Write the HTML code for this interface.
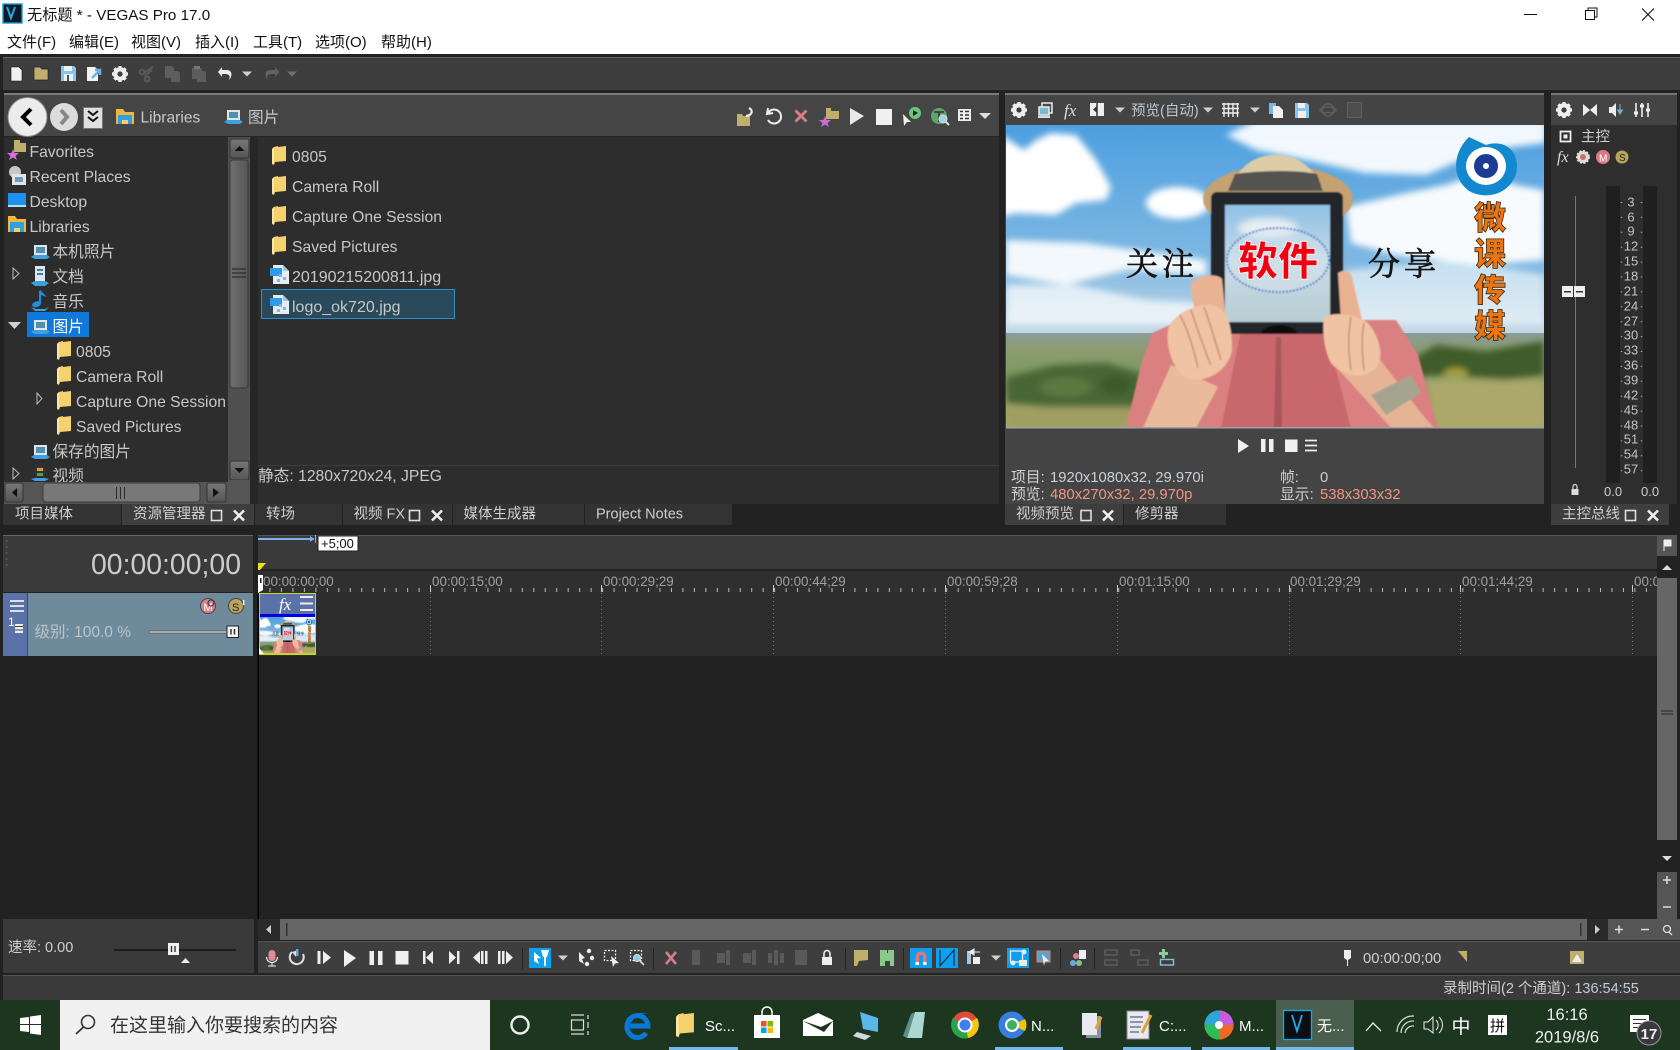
<!DOCTYPE html>
<html lang="zh"><head><meta charset="utf-8"><title>VEGAS Pro 17.0</title>
<style>
html,body{margin:0;padding:0;background:#222;width:1680px;height:1050px;overflow:hidden}
svg{display:block}
text{font-family:"Liberation Sans","Noto Sans CJK SC",sans-serif;font-size:15.7px;fill:#c8c8c8;white-space:pre}
.b{fill:#111;font-size:15px}
.l{fill:#c9c9c9;font-size:15.6px}
.t{fill:#cfcfcf;font-size:14.5px}
.r{fill:#a0a0a0;font-size:13.4px}
.m{fill:#c4c4c4;font-size:13px;text-anchor:middle}
.i{font-size:14.8px;fill:#c8d0d8}
.s{font-size:14.8px;fill:#f09585}
.w{fill:#fff;font-size:15px}
.o{font-family:"Noto Sans CJK SC",sans-serif;font-weight:900;font-size:32px;fill:#ee7410;stroke:#3a2a10;stroke-width:.8px;text-anchor:middle}
.k{font-family:"Noto Serif CJK SC",serif;font-size:32px;fill:#141414;stroke:#141414;stroke-width:.7px;letter-spacing:4px}
</style></head><body>
<svg xmlns="http://www.w3.org/2000/svg" width="1680" height="1050" viewBox="0 0 1680 1050">
<defs>
<linearGradient id="sky" x1="0" y1="0" x2="0" y2="1"><stop offset="0" stop-color="#4d9fe0"/><stop offset=".45" stop-color="#7fb8e2"/><stop offset=".7" stop-color="#c7dae6"/><stop offset="1" stop-color="#d5e0e6"/></linearGradient>
<linearGradient id="scr" x1="0" y1="0" x2="0" y2="1"><stop offset="0" stop-color="#8fc0e6"/><stop offset=".5" stop-color="#c8dbe6"/><stop offset="1" stop-color="#b8ccd4"/></linearGradient>
<linearGradient id="grd" x1="0" y1="0" x2="0" y2="1"><stop offset="0" stop-color="#8a9c98"/><stop offset=".18" stop-color="#8c9c72"/><stop offset=".4" stop-color="#7f9a62"/><stop offset="1" stop-color="#a8a868"/></linearGradient>
<linearGradient id="sb" x1="0" y1="0" x2="1" y2="0"><stop offset="0" stop-color="#6f6f6f"/><stop offset="1" stop-color="#565656"/></linearGradient>
<linearGradient id="sh" x1="0" y1="0" x2="0" y2="1"><stop offset="0" stop-color="#777"/><stop offset="1" stop-color="#555"/></linearGradient>
<filter id="bl" x="-20%" y="-20%" width="140%" height="140%"><feGaussianBlur stdDeviation="3.5"/></filter>
<filter id="bl2" x="-5%" y="-5%" width="110%" height="110%"><feGaussianBlur stdDeviation=".9"/></filter>
<clipPath id="pc"><rect width="538" height="303"/></clipPath>

<g id="fd"><path d="M0 3 2 1 6 0 V1 L14 0 V15 L3 16 2 19 0 18Z" fill="#f6d26f"/><path d="M0 3 2 1V17L0 18Z" fill="#fbe7a6"/></g>
<g id="pc2"><path d="M3 1H16V11H3Z" fill="#dfe6ea"/><path d="M5 3H14V9H5Z" fill="#4f8fb0"/><path d="M0 13 3 11H16L19 13 16 15H4Z" fill="#3f9fe0"/></g>
<g id="jpg"><path d="M3 0H13L19 6V19H3Z" fill="#e6eef4"/><path d="M13 0 19 6H13Z" fill="#9fc8e8"/><path d="M0 3H12V11H0Z" fill="#2e9be8"/><rect x="9" y="9" width="3" height="3" fill="#7fb8df"/><rect x="13" y="12" width="3" height="3" fill="#7fb8df"/><rect x="7" y="14" width="3" height="3" fill="#7fb8df"/></g>
<g id="gear"><circle r="5.2" fill="none" stroke="#eee" stroke-width="3.4"/><path d="M-1.6-8H1.6V8H-1.6ZM-8-1.6H8V1.6H-8Z" fill="#eee"/><path d="M-1.6-8H1.6V8H-1.6ZM-8-1.6H8V1.6H-8Z" fill="#eee" transform="rotate(45)"/><circle r="2.6" fill="#3d3d3d"/></g>
<path id="xx" d="M-5-5 5 5M5-5-5 5" stroke="#eee" stroke-width="2.6" fill="none"/>
<rect id="sq" width="10" height="10" fill="none" stroke="#ddd" stroke-width="1.6"/>
<path id="da" d="M-5-2.5H5L0 2.5Z" fill="#cfcfcf"/>

<g id="pic" clip-path="url(#pc)">
<rect width="538" height="303" fill="url(#sky)"/>
<g fill="#fff" filter="url(#bl)">
<path d="M-5 10 18 25 30 15 45 8 70 10 90 35 105 62 100 75 70 78 50 90 10 88-5 92Z"/>
<ellipse cx="172" cy="78" rx="32" ry="16"/>
<path d="M220 10 250-5H540V18L480 25 420 50 360 48 300 35 250 25Z" fill-opacity=".92"/>
<path d="M340 82 400 68 440 60 475 48 510 60 538 65V135L470 140 390 130 345 118Z" fill-opacity=".95"/>
<path d="M0 115 80 118 130 125 200 135V150L120 145 60 160 0 150Z" fill-opacity=".9"/>
<path d="M0 160 70 160 140 175 200 178V200H0Z" fill-opacity=".7"/>
<path d="M340 145 450 135 538 150V200H340Z" fill-opacity=".55"/>
</g>
<rect y="208" width="538" height="95" fill="url(#grd)"/>
<g filter="url(#bl)">
<path d="M0 252 50 240 100 238 135 248 140 282 60 284 0 278Z" fill="#4a6635"/>
<ellipse cx="60" cy="262" rx="26" ry="10" fill="#5a7a42"/>
<ellipse cx="110" cy="260" rx="16" ry="10" fill="#3e5a2c"/>
<path d="M405 235 430 220 480 226 538 216V250L500 255 440 250 410 252Z" fill="#3f5c2c"/>
<ellipse cx="450" cy="248" rx="12" ry="5" fill="#a8a040"/>
<path d="M0 282H130L120 303H0Z" fill="#a09e60"/>
<path d="M420 255H538V303H430Z" fill="#aca86a"/>
</g>
<g filter="url(#bl2)">
<path d="M120 303 135 240 146 208 175 195 390 195 412 230 432 303Z" fill="#db8080"/>
<path d="M215 303 235 205 320 205 345 303Z" fill="#c9686c"/>
<path d="M270 212 268 303H276L275 212Z" fill="#a9565a"/>
<path d="M137 303 165 240 212 262 190 303Z" fill="#e9bb9c"/>
<path d="M328 240 372 232 415 288 428 303H385L345 258Z" fill="#e6b395"/>
<path d="M365 270 405 250 415 268 380 290Z" fill="#a5a58f"/>
<ellipse cx="272" cy="74" rx="75" ry="34" fill="#c4a272"/>
<path d="M226 64C232 40 250 30 270 30 295 30 308 45 317 64Z" fill="#dccda8"/>
<path d="M229 49C260 45 290 45 311 49L317 66H222Z" fill="#55534f"/>
<rect x="205" y="67" width="132" height="142" rx="6" fill="#232629"/>
<rect x="219" y="80" width="105" height="117" fill="url(#scr)"/>
<ellipse cx="262" cy="103" rx="30" ry="10" fill="#e8eef2" filter="url(#bl)"/>
<ellipse cx="272" cy="135" rx="51" ry="32" fill="#d8e4ea" fill-opacity=".45" stroke="#3a7fd0" stroke-width="2" stroke-dasharray="2 1.5"/>
<path d="M255 209a18 9 0 0 1 36 0Z" fill="#111"/>
<path d="M185 158C192 150 212 148 216 154L220 195H192C188 180 184 170 185 158Z" fill="#e9b393"/>
<path d="M332 148C338 144 344 146 346 152L356 195H335Z" fill="#e9b393"/>
<path d="M162 205C165 190 190 178 205 180 222 183 226 200 226 225 222 250 190 262 176 250 166 240 160 222 162 205Z" fill="#f0c3a4"/>
<path d="M185 185C192 205 198 225 205 240M198 182C205 200 210 220 215 235M174 190C182 205 188 225 192 243" stroke="#c48a70" stroke-width="1.400" fill="none"/>
<path d="M318 192C330 186 352 190 362 198 372 210 378 228 372 240 360 258 335 250 325 238 318 225 316 205 318 192Z" fill="#f0c3a4"/>
<path d="M345 192C342 210 342 225 345 245M358 198C355 212 356 228 358 245" stroke="#c48a70" stroke-width="1.400" fill="none"/>
</g>
<text x="272" y="150" text-anchor="middle" style="font-family:'Noto Sans CJK SC',sans-serif;font-weight:900;font-size:40px;fill:#f00010;stroke:#fff;stroke-width:.8px">软件</text>
<text x="120" y="150" class="k">关注</text>
<text x="362" y="150" class="k">分享</text>
<path d="M463 12C446 28 445 55 465 67 490 78 512 60 511 40 510 22 495 15 480 20Z" fill="#1488cf"/>
<ellipse cx="480" cy="41" rx="20" ry="19" fill="#fff"/>
<circle cx="480" cy="41" r="12" fill="#1c3c94"/><circle cx="480" cy="41" r="3" fill="#fff"/>
<text x="484" y="104" class="o">微</text><text x="484" y="140" class="o">课</text><text x="484" y="176" class="o">传</text><text x="484" y="212" class="o">媒</text>
</g>
</defs>

<rect width="1680" height="1050" fill="#222"/>
<!-- Title -->
<rect width="1680" height="54" fill="#fff"/>
<rect x="3" y="4" width="19" height="19" fill="#0b1a26" stroke="#1a9ad6" stroke-width="1.4"/>
<path d="M7 7 11 18 15 7" fill="none" stroke="#25a9e8" stroke-width="2"/>
<text x="27" y="20" class="b" style="font-size:15.2px">无标题 * - VEGAS Pro 17.0</text>
<text x="7" y="47" class="b">文件(F)</text><text x="69" y="47" class="b">编辑(E)</text><text x="131" y="47" class="b">视图(V)</text><text x="195" y="47" class="b">插入(I)</text><text x="253" y="47" class="b">工具(T)</text><text x="315" y="47" class="b">选项(O)</text><text x="381" y="47" class="b">帮助(H)</text>
<path d="M1524 14.5H1537" stroke="#111" stroke-width="1"/>
<path d="M1585.5 10.5H1594.5V19.5H1585.5ZM1588 10.5V8H1597V17H1594.5" fill="none" stroke="#111"/>
<path d="M1642 8.500 1654 20.500M1654 8.500 1642 20.500" stroke="#111" stroke-width="1.1"/>

<!-- top toolbar -->
<rect x="3" y="57" width="1677" height="33" fill="#3e3e3e"/>
<rect x="3" y="57" width="1677" height="1" fill="#666"/>
<g transform="translate(11,66)"><path d="M0 1H8L11 4V15H0Z" fill="#f2f2f2" stroke="#111" stroke-width=".6"/></g>
<g transform="translate(34,67)"><path d="M0 0H6L8 2H14V13H0Z" fill="#bfae6c" stroke="#222" stroke-width=".7"/></g>
<g transform="translate(61,66)"><path d="M0 0H13L15 2V15H0Z" fill="#86c6e8"/><rect x="3" y="0" width="8" height="5" fill="#f0f0f0"/><rect x="3" y="8" width="9" height="7" fill="#f0f0f0"/><rect x="6" y="9" width="2" height="6" fill="#2a5a75"/></g>
<g transform="translate(87,66)"><path d="M0 1H8L11 4V15H0Z" fill="#f2f2f2"/><path d="M5 12 12 5M8 4H13V9" stroke="#6ab4dc" stroke-width="2.4" fill="none"/></g>
<use href="#gear" x="120" y="74"/>
<g transform="translate(139,66)" fill="none" stroke="#5d5d5d" stroke-width="1.8"><circle cx="3" cy="6" r="2.4"/><circle cx="8" cy="13" r="2.4"/><path d="M5 7 14 1M6 10 13 4"/></g>
<g transform="translate(165,66)" fill="#5d5d5d"><path d="M0 0H7L9 2V5H13L15 7V16H6V12H0Z"/></g>
<g transform="translate(191,66)" fill="#5d5d5d"><path d="M1 2H11V5H14L15 7V16H6V13H1Z"/><rect x="3" y="0" width="6" height="3" fill="#777"/></g>
<path d="M218 72 222 67V70H227C232 70 233 76 229 80 231 74 228 74 222 74V77Z" fill="#eee"/>
<use href="#da" x="247" y="74"/>
<path d="M279 72 275 67V70H270C265 70 264 76 268 80 266 74 269 74 275 74V77Z" fill="#626262"/>
<use href="#da" x="292" y="74" style="opacity:.35"/>

<!-- explorer -->
<rect x="4" y="93" width="995" height="411" fill="#2d2d2d"/>
<rect x="4" y="93" width="995" height="44" fill="#454545"/>
<rect x="4" y="93" width="995" height="2" fill="#7a7a7a"/>
<rect x="4" y="136" width="995" height="1" fill="#262626"/>
<circle cx="27.500" cy="117" r="19.500" fill="#ececec" stroke="#888"/>
<path d="M31 109 23 117 31 125" fill="none" stroke="#000" stroke-width="4"/>
<circle cx="64" cy="117" r="14" fill="#dcdcdc"/>
<path d="M61 110 67 117 61 124" fill="none" stroke="#888" stroke-width="4"/>
<rect x="83.500" y="107.500" width="19" height="21" fill="#dfdfdf" stroke="#777"/>
<path d="M88 111 93 115 98 111M88 117 93 121 98 117" fill="none" stroke="#111" stroke-width="2"/>
<path d="M116 109H123L125 112H134V124H116Z" fill="#f2b63c"/><path d="M118 115H132V124H128V120H122V124H118Z" fill="#2f9fe6"/><rect x="122" y="120" width="6" height="4" fill="#f5d060"/>
<text x="140.500" y="122.500" class="l">Libraries</text>
<use href="#pc2" x="224" y="109"/>
<text x="248" y="122.500" class="l">图片</text>
<!-- explorer right icons -->
<g transform="translate(737,110)"><path d="M0 4H5L6 6H13V16H0Z" fill="#bfae6c"/><path d="M9 6C16 5 16 0 12-2" fill="none" stroke="#eee" stroke-width="2.200"/></g>
<path d="M768 108 767 114 773 113M768 113A7 7 0 1 1 768 120" fill="none" stroke="#eee" stroke-width="2"/>
<path d="M795.500 110.500 806.500 121.500M806.500 110.500 795.500 121.500" stroke="#d47f88" stroke-width="3"/>
<g transform="translate(820,108)"><path d="M6 0H11V3H19V11H6Z" fill="#bfae6c"/><path d="M5 8 6.500 12 11 12 7.500 15 9 19 5 16.500 1 19 2.500 15-1 12 3.500 12Z" fill="#c76fd8"/></g>
<path d="M850 108 864 116 850 125Z" fill="#e8e8e8"/>
<rect x="876" y="109" width="16" height="16" fill="#f0f0f0"/>
<g transform="translate(902,108)"><circle cx="13" cy="5" r="6" fill="#6cc57c"/><path d="M11 2 16 5 11 8Z" fill="#222"/><path d="M1 6 9 14H5L2 18Z" fill="#eee"/></g>
<g transform="translate(931,108)"><circle cx="8" cy="8" r="8" fill="#5ba86a"/><path d="M3 4H13M8 4V14" stroke="#333" stroke-width="1.600"/><circle cx="12" cy="11" r="4" fill="#9fd2ec" stroke="#ddd"/><path d="M15 14 18 17" stroke="#ddd" stroke-width="2"/></g>
<g transform="translate(958,109)"><rect width="13" height="12" fill="#eee"/><path d="M2 2.500H5M7 2.500H11M2 6H5M7 6H11M2 9.500H5M7 9.500H11" stroke="#333" stroke-width="1.500"/></g>
<path d="M979 113H991L985 119Z" fill="#ddd"/>

<!-- tree -->
<g transform="translate(8,140)"><path d="M6 0H12V3H18V12H6Z" fill="#bfae6c"/><path d="M5 9 6.500 13 11 13 7.500 16 9 20 5 17.500 1 20 2.500 16-1 13 3.500 13Z" fill="#d76fd8"/></g>
<text x="29.500" y="157">Favorites</text>
<g transform="translate(8,166)"><circle cx="7" cy="6" r="6" fill="#c8c8c8"/><rect x="4" y="8" width="14" height="11" fill="#e4e4e4"/><rect x="7" y="11" width="8" height="5" fill="#6a9cc0"/></g>
<text x="29.500" y="182">Recent Places</text>
<rect x="8" y="193" width="18" height="12" fill="#1e90f0"/><rect x="8" y="205" width="18" height="2" fill="#b8e0f8"/>
<text x="29.500" y="207">Desktop</text>
<path d="M8 216H15L17 219H26V232H8Z" fill="#f2b63c"/><path d="M10 222H24V232H20V228H14V232H10Z" fill="#2f9fe6"/><rect x="14" y="228" width="6" height="4" fill="#f5d060"/>
<text x="29.500" y="232">Libraries</text>
<use href="#pc2" x="31" y="244"/><text x="52.500" y="257">本机照片</text>
<path d="M13 268 19 273.500 13 279Z" fill="none" stroke="#bbb"/>
<g transform="translate(31,266)"><path d="M4 0H14V15H4Z" fill="#dfe6ea"/><rect x="6" y="3" width="6" height="2" fill="#3a7fb0"/><rect x="6" y="7" width="6" height="2" fill="#3a7fb0"/><path d="M0 17 4 15H14L18 17 14 20H4Z" fill="#3f9fe0"/></g>
<text x="52.500" y="282">文档</text>
<g transform="translate(31,290)"><path d="M10 0V13C10 16 6 18 3 17 0 16 1 13 4 12 6 11 8 11 8 12V1Z" fill="#1f8fe0"/><path d="M10 1 16 7 10 5Z" fill="#1f8fe0"/><path d="M0 17 5 19H14L18 17 14 21H4Z" fill="#3f9fe0"/></g>
<text x="52.500" y="307">音乐</text>
<path d="M8 322H21L14.500 329Z" fill="#cfcfcf"/>
<rect x="27" y="312" width="62" height="25" fill="#0f78d8"/>
<use href="#pc2" x="31" y="319"/><text x="52.500" y="332" class="w" style="font-size:15.7px">图片</text>
<use href="#fd" x="57" y="341"/><text x="76" y="357">0805</text>
<use href="#fd" x="57" y="366"/><text x="76" y="382">Camera Roll</text>
<path d="M37 393 42 398.500 37 404Z" fill="none" stroke="#bbb"/>
<use href="#fd" x="57" y="391"/><text x="76" y="407">Capture One Session</text>
<use href="#fd" x="57" y="416"/><text x="76" y="432">Saved Pictures</text>
<use href="#pc2" x="31" y="444"/><text x="52.500" y="457">保存的图片</text>
<path d="M13 468 19 473.500 13 479Z" fill="none" stroke="#bbb"/>
<g transform="translate(31,466)"><rect x="4" width="10" height="13" fill="#333"/><rect x="6" y="2" width="6" height="3" fill="#d8a040"/><rect x="6" y="7" width="6" height="3" fill="#4f9f60"/><path d="M0 13 4 12H14L18 13 14 15H4Z" fill="#3f9fe0"/></g>
<text x="52.500" y="481">视频</text>
<!-- scrollbars -->
<rect x="228" y="137" width="22" height="367" fill="#505050"/>
<rect x="230" y="139" width="19" height="19" rx="2" fill="url(#sh)" stroke="#333"/><path d="M234.500 151H244.500L239.500 146Z" fill="#111"/>
<rect x="230" y="160" width="18" height="228" rx="3" fill="url(#sb)" stroke="#3a3a3a"/>
<path d="M232 269H246M232 273H246M232 277H246" stroke="#2c2c2c" stroke-width="1.300"/>
<rect x="230" y="461" width="19" height="19" rx="2" fill="url(#sh)" stroke="#333"/><path d="M234.500 468H244.500L239.500 473Z" fill="#111"/>
<rect x="4" y="482" width="224" height="22" fill="#555"/>
<rect x="5" y="483" width="18" height="19" rx="2" fill="url(#sh)" stroke="#333"/><path d="M17 488V497L12 492.500Z" fill="#111"/>
<rect x="43" y="483" width="157" height="19" rx="3" fill="#787878" stroke="#3a3a3a"/>
<path d="M116.500 487V499M120.500 487V499M124.500 487V499" stroke="#2c2c2c"/>
<rect x="207" y="483" width="19" height="19" rx="2" fill="url(#sh)" stroke="#333"/><path d="M213 488V497L219 492.500Z" fill="#111"/>
<rect x="250" y="137" width="8" height="367" fill="#262626"/>
<rect x="228" y="480" width="22" height="24" fill="#555"/>
<!-- list -->
<use href="#fd" x="272" y="146"/><text x="292" y="162">0805</text>
<use href="#fd" x="272" y="176"/><text x="292" y="192">Camera Roll</text>
<use href="#fd" x="272" y="206"/><text x="292" y="222">Capture One Session</text>
<use href="#fd" x="272" y="236"/><text x="292" y="252">Saved Pictures</text>
<use href="#jpg" x="270" y="265"/><text x="292" y="282" style="font-size:16px">20190215200811.jpg</text>
<rect x="261.500" y="289.500" width="193" height="29" fill="#2a4a5c" stroke="#2a8fc5"/>
<use href="#jpg" x="270" y="295"/><text x="292" y="312" style="font-size:16px">logo_ok720.jpg</text>
<rect x="258" y="465" width="741" height="1" fill="#3c3c3c"/>
<text x="258" y="481">静态: 1280x720x24, JPEG</text>

<!-- tabs -->
<rect x="0" y="504" width="1005" height="31" fill="#222"/>
<rect x="3" y="504" width="118" height="21" fill="#333"/>
<rect x="122" y="504" width="132" height="21" fill="#3e3e3e"/>
<rect x="255" y="504" width="87" height="21" fill="#333"/>
<rect x="343" y="504" width="109" height="21" fill="#333"/>
<rect x="453" y="504" width="131" height="21" fill="#333"/>
<rect x="585" y="504" width="147" height="21" fill="#333"/>
<text x="15" y="518.500" class="t">项目媒体</text>
<text x="133" y="518.500" class="t">资源管理器</text><use href="#sq" x="211.500" y="510.500"/><use href="#xx" x="239" y="515.500"/>
<text x="266" y="518.500" class="t">转场</text>
<text x="353.500" y="518.500" class="t">视频 FX</text><use href="#sq" x="409.500" y="510.500"/><use href="#xx" x="437" y="515.500"/>
<text x="463.500" y="518.500" class="t">媒体生成器</text>
<text x="596" y="518.500" class="t">Project Notes</text>

<!-- preview -->
<rect x="1005" y="93" width="539" height="411" fill="#444"/>
<rect x="1005" y="93" width="539" height="2" fill="#777"/>
<use href="#gear" x="1019" y="110"/>
<g transform="translate(1038,103)"><rect x="4" y="0" width="10" height="10" fill="#4a4a4a" stroke="#eee" stroke-width="1.500"/><rect x="1" y="4" width="10" height="8" fill="#7ab8d8" stroke="#eee" stroke-width="1.500"/><path d="M0 14H12" stroke="#eee" stroke-width="1.800"/></g>
<text x="1064" y="116" style="font-family:'Liberation Serif',serif;font-style:italic;font-size:17px;fill:#ddd">fx</text>
<g transform="translate(1090,103)"><rect width="14" height="13" fill="#eee"/><path d="M7 0V13" stroke="#333" stroke-width="1.500"/><path d="M7 3 3 6.500 7 10Z" fill="#333"/></g>
<use href="#da" x="1120" y="110"/>
<text x="1131" y="115.500" class="i" style="fill:#bcc8d0;font-size:14.5px">预览(自动)</text>
<use href="#da" x="1208" y="110"/>
<g stroke="#eee" stroke-width="1.400" fill="none"><path d="M1224 103V117M1228.500 103V117M1233 103V117M1237.500 103V117M1222 104H1239M1222 108.500H1239M1222 113H1239"/></g>
<use href="#da" x="1255" y="110"/>
<g transform="translate(1269,103)"><path d="M0 0H7V11H0Z" fill="#78b8e0"/><path d="M4 3H10L14 7V15H4Z" fill="#f0f0f0"/></g>
<g transform="translate(1295,103)"><path d="M0 0H12L14 2V15H0Z" fill="#86c6e8"/><rect x="3" y="0" width="7" height="5" fill="#f0f0f0"/><rect x="3" y="8" width="8" height="7" fill="#f0f0f0"/></g>
<g fill="none" stroke="#5d5d5d" stroke-width="1.500"><circle cx="1328" cy="110" r="6"/><ellipse cx="1328" cy="110" rx="8" ry="3"/></g>
<rect x="1347.500" y="102.500" width="14" height="15" fill="#4d4d4d" stroke="#5f5f5f"/>
<use href="#pic" x="1006" y="125"/>
<rect x="1006" y="427" width="538" height="1.500" fill="#a0a0a0"/>
<path d="M1238 439 1249 446 1238 453Z" fill="#f0f0f0"/>
<rect x="1261" y="439" width="4.500" height="13" fill="#f0f0f0"/><rect x="1269" y="439" width="4.500" height="13" fill="#f0f0f0"/>
<rect x="1285" y="439.500" width="12.500" height="12.500" fill="#f0f0f0"/>
<path d="M1305 440.500H1317M1305 445.500H1317M1305 450.500H1317" stroke="#eee" stroke-width="1.800"/>
<text x="1011" y="482" class="i" style="fill:#d0d0d0">项目: </text><text x="1050" y="482" class="i">1920x1080x32, 29.970i</text>
<text x="1011" y="499" class="i" style="fill:#d0d0d0">预览: </text><text x="1050" y="499" class="s">480x270x32, 29.970p</text>
<text x="1280" y="482" class="i" style="fill:#d0d0d0">帧:</text><text x="1320" y="482" class="i">0</text>
<text x="1280" y="499" class="i" style="fill:#d0d0d0">显示: </text><text x="1320" y="499" class="s">538x303x32</text>
<rect x="1005" y="504" width="118" height="21" fill="#3e3e3e"/>
<rect x="1124" y="504" width="102" height="21" fill="#333"/>
<text x="1016" y="518.500" class="t">视频预览</text><use href="#sq" x="1081" y="510.500"/><use href="#xx" x="1108" y="515.500"/>
<text x="1135" y="518.500" class="t">修剪器</text>

<!-- master -->
<rect x="1551" y="93" width="126" height="411" fill="#2e2e2e"/>
<rect x="1551" y="93" width="126" height="32" fill="#444"/>
<rect x="1551" y="93" width="126" height="2" fill="#777"/>
<use href="#gear" x="1564" y="110"/>
<path d="M1583 104 1590 110 1583 116ZM1597 104 1590 110 1597 116Z" fill="#eee"/>
<path d="M1609 107H1612L1616 103V117L1612 113H1609Z" fill="#eee"/><path d="M1620 104V112M1617.500 110 1620 114 1622.500 110Z" stroke="#6fb0d8" fill="#6fb0d8"/>
<g stroke="#eee" stroke-width="1.600"><path d="M1636 103V117M1642 103V117M1648 103V117"/><path d="M1634 113H1638M1640 106H1644M1646 110H1650" stroke-width="3"/></g>
<rect x="1560.500" y="131.500" width="10" height="10" fill="none" stroke="#eee" stroke-width="1.800"/><rect x="1563.500" y="134.500" width="4" height="4" fill="#eee"/>
<text x="1581" y="141.500" class="t">主控</text>
<text x="1557" y="162" style="font-family:'Liberation Serif',serif;font-style:italic;font-size:16px;fill:#ddd">fx</text>
<circle cx="1583" cy="157" r="6" fill="#ddd" stroke="#ddd" stroke-dasharray="2 1.500" stroke-width="2"/><circle cx="1583" cy="157" r="3" fill="#d06a70"/>
<circle cx="1603" cy="157" r="7" fill="#d87a86"/><text x="1599" y="161.500" style="font-size:10px;fill:#fff">M</text>
<circle cx="1622" cy="157" r="6.500" fill="#b8a45c"/><text x="1619" y="161" style="font-size:10px;fill:#222">S</text>
<rect x="1575" y="196" width="1" height="272" fill="#777"/>
<rect x="1562" y="286" width="11" height="11" fill="#eee"/><rect x="1574" y="286" width="11" height="11" fill="#eee"/>
<rect x="1564" y="291" width="7" height="1.500" fill="#333"/><rect x="1576" y="291" width="7" height="1.500" fill="#333"/>
<rect x="1606" y="186" width="14" height="297" fill="#1f1f1f"/><rect x="1643" y="186" width="14" height="297" fill="#1f1f1f"/>
<g>
<text x="1631" y="206.500" class="m">3</text><text x="1631" y="221.500" class="m">6</text><text x="1631" y="235.500" class="m">9</text><text x="1631" y="250.500" class="m">12</text><text x="1631" y="265.500" class="m">15</text><text x="1631" y="280.500" class="m">18</text><text x="1631" y="295.500" class="m">21</text><text x="1631" y="310.500" class="m">24</text><text x="1631" y="325.500" class="m">27</text><text x="1631" y="339.500" class="m">30</text><text x="1631" y="354.500" class="m">33</text><text x="1631" y="369.500" class="m">36</text><text x="1631" y="384.500" class="m">39</text><text x="1631" y="399.500" class="m">42</text><text x="1631" y="414.500" class="m">45</text><text x="1631" y="429.500" class="m">48</text><text x="1631" y="443.500" class="m">51</text><text x="1631" y="458.500" class="m">54</text><text x="1631" y="473.500" class="m">57</text>
</g>
<path d="M1621.500 202V474" stroke="#aaa" stroke-width="1.500" stroke-dasharray="1 13.900"/>
<path d="M1641.500 202V474" stroke="#aaa" stroke-width="1.500" stroke-dasharray="1 13.900"/>
<rect x="1571.500" y="489" width="7" height="6" fill="#ddd"/><path d="M1573 489V486.500A2 2 0 0 1 1577 486.500V489" fill="none" stroke="#ddd" stroke-width="1.200"/>
<text x="1604" y="496" class="t" style="font-size:13px">0.0</text><text x="1641" y="496" class="t" style="font-size:13px">0.0</text>
<rect x="1551" y="504" width="118" height="21" fill="#3e3e3e"/>
<text x="1562" y="518.500" class="t">主控总线</text><use href="#sq" x="1625.500" y="510.500"/><use href="#xx" x="1653" y="515.500"/>

<!-- timeline -->
<rect x="3" y="535" width="250" height="57" fill="#3a3a3a"/>
<rect x="3" y="535" width="250" height="1" fill="#666"/>
<path d="M6.500 540V568" stroke="#555" stroke-width="2" stroke-dasharray="2 4"/>
<text x="91" y="574" style="font-size:28.400px;fill:#cccccc">00:00:00;00</text>
<rect x="3" y="593" width="24.500" height="63" fill="#5a72a8"/>
<rect x="28" y="593" width="225" height="63" fill="#6f8a9a"/>
<path d="M10 601H24M10 606H24M10 611H24" stroke="#eee" stroke-width="1.800"/>
<text x="8" y="626" style="font-size:12px;fill:#fff">1</text>
<rect x="15" y="624" width="8" height="9" fill="#eee"/><path d="M15 626.500H23M15 630H23" stroke="#444"/>
<text x="34.500" y="637" class="t" style="fill:#b8c6ce;font-size:15.500px">级别: 100.0 %</text>
<rect x="149" y="630.500" width="78" height="3" fill="#aaa" stroke="#4d5a62" stroke-width=".6"/>
<rect x="227" y="626" width="11.500" height="11.500" fill="#f4f4f4" stroke="#222"/><path d="M231 629V634.500M234.500 629V634.500" stroke="#333" stroke-width="1.500"/>
<circle cx="208" cy="606" r="7.500" fill="#d8808a" stroke="#444"/><text x="203.500" y="611" style="font-size:11px;fill:#fff">M</text><circle cx="211" cy="603" r="3" fill="none" stroke="#333"/>
<circle cx="236" cy="606" r="7.500" fill="#b8a45c" stroke="#444"/><text x="232" y="611" style="font-size:11px;fill:#222">S</text><rect x="243" y="600" width="1.500" height="5" fill="#eee"/>

<rect x="258" y="535" width="1399" height="34" fill="#3a3a3a"/>
<rect x="258" y="535" width="1399" height="1" fill="#555"/>
<rect x="258" y="569" width="1399" height="2" fill="#222"/>
<rect x="258" y="571" width="1399" height="22" fill="#2f2f2f"/>
<rect x="258" y="593" width="1399" height="63" fill="#2d2d2d"/>
<path d="M258 539H314" stroke="#7fb0f0" stroke-width="2"/><path d="M310 536 314 539 310 542Z" fill="#7fb0f0"/><path d="M315.500 535V543" stroke="#7fb0f0"/>
<rect x="318" y="536" width="40" height="15" fill="#fff" stroke="#222"/><text x="321" y="548" style="font-size:13px;fill:#111">+5;00</text>
<path d="M258 563H266L260 570H258Z" fill="#e8e020"/>
<path d="M258 590H1657" stroke="#bbb" stroke-width="4" stroke-dasharray="1 10.470"/>
<g stroke="#ccc"><path d="M430.500 585V592M601.500 585V592M773.500 585V592M945.500 585V592M1117.500 585V592M1289.500 585V592M1460.500 585V592M1632.500 585V592"/></g>
<g stroke="#777" stroke-dasharray="1 3"><path d="M430.500 593V656M601.500 593V656M773.500 593V656M945.500 593V656M1117.500 593V656M1289.500 593V656M1460.500 593V656M1632.500 593V656"/></g>
<text x="263" y="586" class="r">00:00:00;00</text><text x="432" y="586" class="r">00:00:15;00</text><text x="603" y="586" class="r">00:00:29;29</text><text x="775" y="586" class="r">00:00:44;29</text><text x="947" y="586" class="r">00:00:59;28</text><text x="1119" y="586" class="r">00:01:15;00</text><text x="1290" y="586" class="r">00:01:29;29</text><text x="1462" y="586" class="r">00:01:44;29</text>
<svg x="1634" y="570" width="23" height="22"><text x="0" y="16" class="r">00:01:59;29</text></svg>
<path d="M258 575H263V590L258 593Z" fill="#fff"/><rect x="260" y="578" width="1.500" height="5" fill="#222"/>
<rect x="257.500" y="593" width="1.500" height="326" fill="#000"/>
<!-- event -->
<rect x="259" y="593" width="57" height="62" fill="#c8d820"/>
<rect x="260" y="594" width="55" height="20" fill="#5a72a8"/>
<text x="279" y="610" style="font-family:'Liberation Serif',serif;font-style:italic;font-size:17px;fill:#fff">fx</text>
<path d="M300 597H313M300 603.500H313M300 610H313" stroke="#eee" stroke-width="2"/>
<rect x="260" y="614" width="55" height="3" fill="#0000e0"/>
<svg x="260" y="617" width="55" height="36" viewBox="0 0 538 303" preserveAspectRatio="none"><use href="#pic"/></svg>
<path d="M259 648 264 654H259Z" fill="#fff"/>

<!-- right scrollbar -->
<rect x="1657" y="535" width="23" height="384" fill="#222"/>
<rect x="1657" y="535" width="20" height="21" fill="#555"/>
<path d="M1664 540V551M1664 540H1671V546H1664" stroke="#eee" fill="#eee"/>
<path d="M1662 570H1672L1667 565Z" fill="#ddd"/>
<rect x="1657" y="578" width="20" height="262" fill="#666"/>
<path d="M1661 711H1673M1661 714H1673" stroke="#333" stroke-width="1.200"/>
<path d="M1662 856H1672L1667 861Z" fill="#ddd"/>
<rect x="1657" y="872" width="20" height="47" fill="#555"/>
<path d="M1663 880H1671M1667 876V884" stroke="#ddd" stroke-width="1.500"/>
<path d="M1663 907H1671" stroke="#ddd" stroke-width="1.500"/>

<!-- bottom -->
<rect x="3" y="919" width="251" height="54" fill="#3a3a3a"/>
<text x="8" y="952" class="t">速率: 0.00</text>
<rect x="114" y="949" width="122" height="2" fill="#1c1c1c"/>
<rect x="168" y="943" width="11" height="12" fill="#f2f2f2"/><path d="M171.500 946V952M175 946V952" stroke="#333" stroke-width="1.400"/>
<path d="M181 963H190L185.500 958Z" fill="#eee"/>
<rect x="258" y="919" width="22" height="21" fill="#2a2a2a"/><path d="M271 925V934L266 929.500Z" fill="#ccc"/>
<rect x="280" y="919" width="1307" height="21" fill="#666"/>
<rect x="286" y="923" width="1.500" height="13" fill="#333"/><rect x="1580" y="923" width="1.500" height="13" fill="#333"/>
<rect x="1587" y="919" width="21" height="21" fill="#2a2a2a"/><path d="M1595 925V934L1600 929.500Z" fill="#ccc"/>
<rect x="1608" y="919" width="72" height="21" fill="#555"/>
<path d="M1615 929.500H1623M1619 925.500V933.500M1641 929.500H1649" stroke="#ddd" stroke-width="1.500"/>
<circle cx="1667" cy="929" r="3.500" fill="none" stroke="#ddd" stroke-width="1.300"/><path d="M1669 932 1672 935" stroke="#ddd" stroke-width="1.300"/>
<rect x="258" y="942" width="1422" height="31" fill="#3e3e3e"/>
<rect x="258" y="941" width="1422" height="1" fill="#555"/>
<rect x="0" y="973" width="1680" height="2" fill="#222"/>
<rect x="3" y="975" width="1677" height="25" fill="#3a3a3a"/>
<rect x="3" y="975" width="1677" height="1" fill="#555"/>
<text x="1443" y="993" class="t">录制时间(2 个通道): <tspan style="fill:#c0ccd8">136:54:55</tspan></text>

<!-- transport icons -->
<rect x="268.500" y="950" width="7" height="11" rx="3.500" fill="#e08a96"/><path d="M266.500 957A5.500 5.500 0 0 0 277.500 957M272 963V966M268 966H276" fill="none" stroke="#ddd" stroke-width="1.300"/>
<path d="M292 952A7 7 0 1 0 303 954" fill="none" stroke="#ddd" stroke-width="2"/><path d="M296 957 292 952 298 950Z" fill="#ddd"/><rect x="296" y="949" width="2.500" height="7" fill="#5fa8d0"/>
<rect x="317.500" y="951" width="3" height="13" fill="#eee"/><path d="M323 951 331 957.500 323 964Z" fill="#eee"/>
<path d="M344 950 356 958 344 967Z" fill="#f0f0f0"/>
<rect x="369.500" y="951" width="4.500" height="14" fill="#f0f0f0"/><rect x="378" y="951" width="4.500" height="14" fill="#f0f0f0"/>
<rect x="395.500" y="951" width="13" height="13.500" fill="#f0f0f0"/>
<rect x="423" y="951" width="2.500" height="13" fill="#eee"/><path d="M433 951 426 957.500 433 964Z" fill="#eee"/>
<path d="M449 951 456 957.500 449 964Z" fill="#eee"/><rect x="457" y="951" width="2.500" height="13" fill="#eee"/>
<path d="M473 957.500 480 951V964Z" fill="#eee"/><rect x="481" y="951" width="2.500" height="13" fill="#eee"/><rect x="485" y="951" width="2.500" height="13" fill="#eee"/>
<rect x="498" y="951" width="2.500" height="13" fill="#eee"/><rect x="502" y="951" width="2.500" height="13" fill="#eee"/><path d="M506 951 513 957.500 506 964Z" fill="#eee"/>
<rect x="522" y="948" width="1" height="21" fill="#222"/>
<rect x="529" y="948" width="22" height="20" fill="#0ca0ee"/><path d="M534 952 541 958 537 958.500 539 964 534 961Z" fill="#fff"/><path d="M541 950H549L547 957H546V966H544V957H543Z" fill="#fff"/>
<use href="#da" x="563" y="958"/>
<path d="M579 952 585 958 582 959 584 964 579 961Z" fill="#eee"/><circle cx="589" cy="951" r="2.200" fill="#eee"/><circle cx="592" cy="958" r="2.200" fill="#eee"/><circle cx="587" cy="964" r="2.200" fill="#eee"/>
<rect x="604.500" y="950.500" width="11" height="10" fill="none" stroke="#eee" stroke-width="1.300" stroke-dasharray="2 1.500"/><path d="M611 956 619 963 615 963.500 613 967Z" fill="#eee"/>
<rect x="630.500" y="950.500" width="11" height="10" fill="none" stroke="#eee" stroke-width="1.300" stroke-dasharray="2 1.500"/><circle cx="637" cy="958" r="3.500" fill="#8fc8e8" stroke="#ddd"/><path d="M640 961 644 965" stroke="#ddd" stroke-width="1.600"/>
<rect x="653" y="948" width="1" height="21" fill="#222"/>
<path d="M666 952 676 964M676 952 666 964" stroke="#d47f88" stroke-width="2.600"/>
<g fill="#5a5a5a"><rect x="692" y="950" width="8" height="15"/><rect x="717" y="953" width="8" height="10"/><rect x="726" y="950" width="4" height="15"/><rect x="743" y="953" width="8" height="10"/><rect x="752" y="950" width="4" height="15"/><rect x="768" y="953" width="4" height="10"/><rect x="774" y="950" width="4" height="15"/><rect x="780" y="953" width="4" height="10"/><rect x="795" y="950" width="12" height="15"/></g>
<rect x="822" y="957" width="10" height="8" fill="#eee"/><path d="M824 957V953.500A3 3 0 0 1 830 953.500V957" fill="none" stroke="#eee" stroke-width="1.600"/>
<rect x="845" y="948" width="1" height="21" fill="#222"/>
<path d="M854 950H868V960L859 961 857 966H854Z" fill="#bfae6c"/>
<path d="M880 950H887V953H888V950H894V966H890V961H885V966H880Z" fill="#8bc88a"/>
<rect x="903" y="948" width="1" height="21" fill="#222"/>
<rect x="910" y="948" width="22" height="20" fill="#0ca0ee"/><path d="M915.500 965V957A5.500 5.500 0 0 1 926.500 957V965H923V957A2 2 0 0 0 919 957V965Z" fill="#e8737f"/><rect x="915.500" y="962" width="3.500" height="3" fill="#fff"/><rect x="923" y="962" width="3.500" height="3" fill="#fff"/>
<rect x="936" y="948" width="22" height="20" fill="#0ca0ee"/><path d="M940 950V966L954 950V966" fill="none" stroke="#16374f" stroke-width="1.300"/>
<rect x="967" y="951" width="4" height="13" fill="#9fc8e4"/><rect x="973" y="957" width="7" height="7" fill="#eee"/><path d="M974 949 969 952 974 955ZM973 952H980" fill="#eee" stroke="#eee"/>
<use href="#da" x="996" y="958"/>
<rect x="1007" y="948" width="22" height="20" fill="#0ca0ee"/><g fill="none" stroke="#eee" stroke-width="1.300"><rect x="1010.500" y="951" width="12" height="11"/></g><circle cx="1013" cy="963" r="2.500" fill="#eee"/><circle cx="1024" cy="952" r="2.500" fill="#eee"/><rect x="1019" y="960" width="8" height="6" fill="#eee"/>
<rect x="1037" y="951" width="13" height="11" fill="#5fa0c4" stroke="#d8838c"/><path d="M1042 954 1049 961 1045 961.500 1044 966Z" fill="#eee"/>
<rect x="1060" y="948" width="1" height="21" fill="#222"/>
<circle cx="1076" cy="956" r="3" fill="#d8838c"/><circle cx="1073" cy="963" r="3" fill="#6fa8d8"/><circle cx="1079" cy="963" r="3" fill="#7fc08f"/><rect x="1079" y="950" width="7" height="9" fill="#eee"/>
<rect x="1094" y="948" width="1" height="21" fill="#222"/>
<g fill="none" stroke="#5c5c5c" stroke-width="1.500"><rect x="1105" y="950" width="12" height="5"/><rect x="1105" y="960" width="12" height="5"/><rect x="1131" y="950" width="8" height="5"/><rect x="1138" y="960" width="10" height="5"/></g>
<path d="M1162 949H1165V952H1168V955H1165V958H1162V955H1159V952H1162Z" fill="#8fc89a"/><rect x="1160.500" y="959.500" width="13" height="5.500" fill="none" stroke="#86c1dd" stroke-width="1.400"/>
<path d="M1344 950H1351V958L1348 960V966H1347V960L1344 958Z" fill="#eee"/>
<text x="1363" y="963" class="i" style="fill:#c8cfd6">00:00:00;00</text>
<path d="M1458 951H1467V962Z" fill="#bfae6c"/>
<path d="M1570 951H1584V964H1570Z" fill="#bfae6c"/><path d="M1572 962 1577 954 1582 962Z" fill="#eee"/>

<!-- taskbar -->
<rect y="1000" width="1680" height="50" fill="#1c3620"/>
<rect x="60" y="1000" width="430" height="50" fill="#f0f0f0"/>
<path d="M20 1018 29 1017V1024H20ZM30 1016.500 41 1015V1024H30ZM20 1025H29V1032L20 1031ZM30 1025H41V1035L30 1033.500Z" fill="#fff"/>
<circle cx="88" cy="1022" r="6.500" fill="none" stroke="#333" stroke-width="1.600"/><path d="M83.500 1027 76 1034" stroke="#333" stroke-width="1.800"/>
<text x="110" y="1031.500" style="font-size:19px;fill:#333">在这里输入你要搜索的内容</text>
<circle cx="520" cy="1025" r="8.500" fill="none" stroke="#eee" stroke-width="2.400"/>
<g fill="none" stroke="#ddd" stroke-width="1.200"><rect x="571.500" y="1020" width="12" height="10"/><path d="M571 1015H584M571 1034H584M588 1015V1019M588 1022V1028M588 1031V1035"/></g>
<path d="M630 1026H648A10.500 11 0 1 0 646 1033" fill="none" stroke="#0a78d7" stroke-width="5"/><path d="M628 1022C630 1014 640 1011 648 1014 640 1013 634 1016 632 1022Z" fill="#0a78d7"/>
<g transform="translate(676,1013) scale(1.280)"><use href="#fd"/></g>
<text x="705" y="1031" class="w">Sc...</text>
<rect x="669" y="1047" width="69" height="3" fill="#76b9ed"/>
<path d="M754 1015H780V1038H754Z" fill="#fff"/><path d="M762 1015V1012A5 5 0 0 1 772 1012V1015" fill="none" stroke="#fff" stroke-width="1.500"/>
<rect x="761" y="1021" width="5.500" height="5.500" fill="#f25022"/><rect x="767.500" y="1021" width="5.500" height="5.500" fill="#7fba00"/><rect x="761" y="1027.500" width="5.500" height="5.500" fill="#00a4ef"/><rect x="767.500" y="1027.500" width="5.500" height="5.500" fill="#ffb900"/>
<path d="M803 1020 818 1013 833 1020V1036H803Z" fill="#fff"/><path d="M803 1021 821 1027 833 1021 824 1032Z" fill="#1c3620"/>
<g transform="translate(857,1012)"><path d="M3 0 21 6V20L6 17Z" fill="#5db6ea"/><path d="M0 20 14 24 8 28-4 24Z" fill="#d0d8e0"/></g>
<path d="M907 1038 915 1012H925L922 1038Z" fill="#a8d8d0"/><path d="M907 1038 915 1012 911 1014 903 1036Z" fill="#5f8f88"/>
<circle cx="965" cy="1025" r="13.500" fill="#e24a3c"/><path d="M965 1025 977 1018A13.500 13.500 0 0 1 968 1038Z" fill="#f9c513"/><path d="M965 1025 968 1038A13.500 13.500 0 0 1 953 1018Z" fill="#2ca24c"/><circle cx="965" cy="1025" r="6.500" fill="#3d7ff0" stroke="#fff" stroke-width="2"/>
<circle cx="1012" cy="1025" r="13.500" fill="#3a7de0"/><path d="M1012 1025 1025 1019A13.500 13.500 0 0 1 1025 1031Z" fill="#f4c20d"/><circle cx="1012" cy="1025" r="6" fill="#3fae66" stroke="#fff" stroke-width="2"/>
<text x="1031" y="1031" class="w">N...</text>
<rect x="995" y="1047" width="68" height="3" fill="#76b9ed"/>
<g transform="translate(1082,1013)"><rect x="4" y="3" width="15" height="22" fill="#8a92a4"/><rect width="15" height="22" fill="#e8e8f0"/><path d="M14 16 19 4" stroke="#e8a030" stroke-width="3"/></g>
<g transform="translate(1127,1011)"><rect width="22" height="28" fill="#e8e8f0" stroke="#888"/><path d="M3 6H16M3 11H16M3 16H14M3 21H12" stroke="#6a7a90" stroke-width="1.500"/><path d="M15 22 24 4" stroke="#e0a030" stroke-width="3"/></g>
<text x="1159" y="1031" class="w">C:...</text>
<rect x="1123" y="1047" width="68" height="3" fill="#76b9ed"/>
<circle cx="1219" cy="1025" r="14.500" fill="#e8c620"/><path d="M1219 1025V1010.500A14.500 14.500 0 0 1 1233.500 1025Z" fill="#c65be0"/><path d="M1219 1025H1233.500A14.500 14.500 0 0 1 1219 1039.500Z" fill="#ee6a20"/><path d="M1219 1025V1039.500A14.500 14.500 0 0 1 1204.500 1025Z" fill="#2ebd58"/><path d="M1219 1025H1204.500A14.500 14.500 0 0 1 1219 1010.500Z" fill="#2aa6d8"/><circle cx="1219" cy="1025" r="4" fill="#fff"/>
<text x="1239" y="1031" class="w">M...</text>
<rect x="1202" y="1047" width="68" height="3" fill="#76b9ed"/>
<rect x="1276" y="1000" width="78" height="50" fill="#4a5f4d"/>
<rect x="1283.500" y="1010.500" width="28" height="29" fill="#0b0f14" stroke="#18a8e8" stroke-width="1.300"/>
<path d="M1292 1015 1297 1031 1302 1015" fill="none" stroke="#25a9e8" stroke-width="1.800"/>
<text x="1317" y="1031" class="w">无...</text>
<rect x="1276" y="1047" width="78" height="3" fill="#76b9ed"/>
<path d="M1366 1031 1373 1023 1381 1031" fill="none" stroke="#eee" stroke-width="1.300"/>
<g fill="none" stroke="#ddd" stroke-width="1.200"><path d="M1397 1032A16 16 0 0 1 1414 1016"/><path d="M1401 1033A12 12 0 0 1 1414 1021"/><path d="M1405 1033A8 8 0 0 1 1414 1026"/></g>
<path d="M1424 1022H1428L1433 1017V1033L1428 1029H1424Z" fill="none" stroke="#eee"/><path d="M1436 1020A7 7 0 0 1 1436 1030M1439 1017A11 11 0 0 1 1439 1033" fill="none" stroke="#eee"/>
<text x="1451.500" y="1033" style="font-size:19px;fill:#fff">中</text>
<rect x="1488" y="1015" width="19" height="20" fill="#fff"/><text x="1490" y="1031" style="font-size:15px;fill:#111">拼</text>
<text x="1567" y="1020" text-anchor="middle" style="font-size:16.500px;fill:#eee">16:16</text>
<text x="1567" y="1042.500" text-anchor="middle" style="font-size:16.500px;fill:#eee">2019/8/6</text>
<rect x="1630" y="1015" width="19" height="17" fill="#fff"/><path d="M1633 1019.500H1646M1633 1023.500H1646M1633 1027.500H1641" stroke="#333"/>
<circle cx="1649" cy="1033" r="12" fill="#3a3a3a" stroke="#999"/>
<text x="1649" y="1039" text-anchor="middle" style="font-size:15px;font-weight:700;fill:#eee">17</text>
</svg>
</body></html>
